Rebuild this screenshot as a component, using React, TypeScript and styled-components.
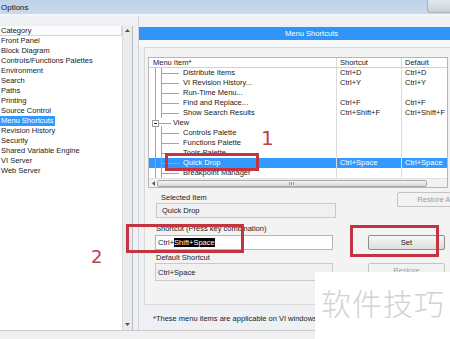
import React from "react";
import styled, { createGlobalStyle } from "styled-components";

const Global = createGlobalStyle`
  html, body { margin: 0; padding: 0; overflow: hidden; background: #f0f0f0; }
  * { box-sizing: border-box; }
`;

const Page = styled.div`
  position: relative;
  width: 450px;
  height: 339px;
  overflow: hidden;
  background: #f0f0f0;
  font-family: "Liberation Sans", Arial, sans-serif;
  font-size: 7.5px;
  color: #1a1a1a;
  display: flex;
  flex-direction: column;
`;

const TitleBar = styled.div`
  height: 16px;
  flex: none;
  display: flex;
  align-items: flex-start;
  background: linear-gradient(#bed2e7, #ccdbeb);
  border-bottom: 2px solid #f2f6fa;
`;

const TitleText = styled.div`
  font-size: 8px;
  line-height: 16px;
  padding-left: 1px;
  color: #111;
`;

const WinControl = styled.div`
  margin-left: auto;
  width: 23px;
  height: 13px;
  border: 1px solid #a9b4c0;
  border-top: none;
  border-right: none;
  border-radius: 0 0 0 3px;
  background: linear-gradient(#e4e8ed, #c9d0d8);
`;

const Body = styled.div`
  flex: none;
  height: 314px;
  display: flex;
  background: #eef0f3;
`;

const LeftPane = styled.div`
  width: 138px;
  flex: none;
  padding-top: 10px;
  display: flex;
`;

const CategoryList = styled.div`
  width: 133px;
  height: 304px;
  display: flex;
  background: #fff;
  border-right: 1px solid #b9bcc0;
`;

const ListItems = styled.div`
  flex: 1;
  display: flex;
  flex-direction: column;
`;

const ListHeader = styled.div`
  height: 10px;
  line-height: 9px;
  padding-left: 1px;
  border-bottom: 1px solid #d4d4d4;
  border-right: 1px solid #d4d4d4;
  background: #fbfbfb;
`;

const ListItem = styled.div<{ $selected?: boolean }>`
  height: 10px;
  line-height: 10px;
  & > span {
    display: inline-block;
    padding: 0 1px;
    background: ${(p) => (p.$selected ? "#3399ff" : "transparent")};
    color: ${(p) => (p.$selected ? "#fff" : "#1a1a1a")};
  }
`;

const VScroll = styled.div`
  width: 10px;
  flex: none;
  background: #ebebeb;
  border-left: 1px solid #dadada;
  display: flex;
  flex-direction: column;
  justify-content: space-between;
  align-items: center;
  padding: 3px 0 4px;
`;

const RightPane = styled.div`
  width: 346px;
  flex: none;
  padding-top: 11px;
  display: flex;
  flex-direction: column;
  border-left: 1px solid #cfd2d6;
`;

const PageHeader = styled.div`
  height: 13px;
  flex: none;
  background: #2f94f4;
  color: #fff;
  text-align: center;
  line-height: 13px;
  font-size: 7.6px;
`;

const HeaderStrip = styled.div`
  height: 7px;
  flex: none;
  background: #f6f8fa;
`;

const Inner = styled.div`
  flex: 1;
  margin-left: 5px;
  border-top: 1px solid #d8d8d8;
  border-left: 1px solid #d8d8d8;
  border-bottom: 1px solid #d8d8d8;
  background: #f3f3f3;
  padding: 9px 0 0 3px;
  display: flex;
  flex-direction: column;
`;

const TreeBox = styled.div`
  width: 300px;
  background: #fff;
  border: 1px solid #b5b5b5;
  display: flex;
  flex-direction: column;
`;

const Cell = styled.div<{ $w?: number; $sep?: boolean }>`
  width: ${(p) => (p.$w ? `${p.$w}px` : "auto")};
  flex: ${(p) => (p.$w ? "none" : "1")};
  padding-left: 3px;
  display: flex;
  align-items: center;
  white-space: nowrap;
  overflow: hidden;
  border-left: ${(p) => (p.$sep ? "1px solid #dcdcdc" : "none")};
`;

const TreeHeader = styled.div`
  height: 10px;
  display: flex;
  line-height: 9px;
  border-bottom: 1px solid #d0d0d0;
  & > ${Cell}:first-child { padding-left: 4px; }
`;

const TreeRows = styled.div`
  height: 110px;
  overflow: hidden;
  display: flex;
  flex-direction: column;
`;

const TreeRow = styled.div<{ $selected?: boolean }>`
  height: 10px;
  flex: none;
  display: flex;
  line-height: 10px;
  background: ${(p) => (p.$selected ? "#3399ff" : "transparent")};
  color: ${(p) => (p.$selected ? "#fff" : "#1a1a1a")};
  & > ${Cell}:first-child { padding-left: 0; }
`;

const HScroll = styled.div`
  height: 9px;
  display: flex;
  align-items: center;
  background: #f2f2f2;
  border-top: 1px solid #e2e2e2;
  padding: 0 20px 0 3px;
  gap: 2px;
`;

const Thumb = styled.div`
  flex: 1;
  height: 7px;
  border: 1px solid #a8a8a8;
  border-radius: 2px;
  background: linear-gradient(#f4f4f4, #d8d8d8);
  display: flex;
  align-items: center;
  justify-content: center;
`;

const Form = styled.div`
  margin: 5px 0 0 7px;
  display: flex;
`;

const LeftCol = styled.div`
  width: 181px;
  flex: none;
  display: flex;
  flex-direction: column;
`;

const Label = styled.div<{ $indent: number; $top: number }>`
  height: 10px;
  line-height: 10px;
  margin-top: ${(p) => p.$top}px;
  padding-left: ${(p) => p.$indent}px;
  color: #222;
`;

const Field = styled.div<{ $disabled?: boolean; $h: number; $w: number; $left: number; $pad: number; $top?: number }>`
  height: ${(p) => p.$h}px;
  width: ${(p) => p.$w}px;
  margin-left: ${(p) => p.$left}px;
  margin-top: ${(p) => p.$top ?? 0}px;
  padding-left: ${(p) => p.$pad}px;
  display: flex;
  align-items: center;
  background: ${(p) => (p.$disabled ? "#f0f0f0" : "#fff")};
  border: 1px solid ${(p) => (p.$disabled ? "#c9c9c9" : "#b4b6ba")};
  white-space: nowrap;
`;

const Highlight = styled.span`
  background: #000;
  color: #fff;
`;

const RightCol = styled.div`
  margin-left: 32px;
  display: flex;
  flex-direction: column;
`;

const Button = styled.div<{ $disabled?: boolean; $top: number; $left?: number }>`
  width: 77px;
  height: 15px;
  flex: none;
  margin-top: ${(p) => p.$top}px;
  margin-left: ${(p) => p.$left ?? 0}px;
  display: flex;
  align-items: center;
  justify-content: center;
  border: 1px solid ${(p) => (p.$disabled ? "#c4c4c4" : "#8d8d8d")};
  border-radius: 2px;
  background: ${(p) => (p.$disabled ? "#f2f2f2" : "linear-gradient(#f7f7f7, #dddddd)")};
  color: ${(p) => (p.$disabled ? "#9c9c9c" : "#111")};
`;

const Footnote = styled.div`
  height: 25px;
  flex: none;
  padding-left: 14px;
  display: flex;
  align-items: center;
  padding-top: 2px;
  color: #222;
`;

const BottomStrip = styled.div`
  flex: 1;
  border-top: 1px solid #c8c8c8;
  background: #f0f0f0;
`;

const RedBox = styled.div<{ $x: number; $y: number; $w: number; $h: number }>`
  position: absolute;
  left: ${(p) => p.$x}px;
  top: ${(p) => p.$y}px;
  width: ${(p) => p.$w}px;
  height: ${(p) => p.$h}px;
  border: 3px solid #c2343f;
`;

const Marker = styled.div<{ $x: number; $y: number; $size: number }>`
  position: absolute;
  left: ${(p) => p.$x}px;
  top: ${(p) => p.$y}px;
  font-family: "DejaVu Sans", sans-serif;
  font-size: ${(p) => p.$size}px;
  line-height: 1;
  color: #b8444c;
`;

const Watermark = styled.div`
  position: absolute;
  left: 315px;
  top: 272px;
  width: 135px;
  height: 67px;
  background: #fff;
  padding: 10px 0 0 6px;
  font-family: "Noto Sans CJK SC", sans-serif;
  font-size: 30px;
  font-weight: 300;
  letter-spacing: 1px;
  line-height: 40px;
  color: #d2d2d2;
  white-space: nowrap;
`;

const Tri = ({ dir }: { dir: "up" | "down" | "left" }) => {
  const pts =
    dir === "up" ? "0,3 5,3 2.5,0" : dir === "down" ? "0,0 5,0 2.5,3" : "3,0 3,5 0,2.5";
  const w = dir === "left" ? 3 : 5;
  const h = dir === "left" ? 5 : 3;
  return (
    <svg width={w} height={h} viewBox={`0 0 ${w} ${h}`} style={{ flex: "none" }}>
      <polygon points={pts} fill="#555" />
    </svg>
  );
};

const ChildGuide = () => (
  <svg width="34" height="10" viewBox="0 0 34 10" style={{ flex: "none" }}>
    <line x1="6.5" y1="0" x2="6.5" y2="10" stroke="#a3a3a3" />
    <line x1="12.5" y1="0" x2="12.5" y2="10" stroke="#a3a3a3" />
    <line x1="13" y1="5.5" x2="30" y2="5.5" stroke="#a3a3a3" />
  </svg>
);

const GroupGuide = () => (
  <svg width="24" height="10" viewBox="0 0 24 10" style={{ flex: "none" }}>
    <line x1="6.5" y1="0" x2="6.5" y2="2" stroke="#a3a3a3" />
    <line x1="6.5" y1="9" x2="6.5" y2="10" stroke="#a3a3a3" />
    <rect x="3.5" y="2.5" width="6" height="6" fill="#fff" stroke="#999" />
    <line x1="5" y1="5.5" x2="8" y2="5.5" stroke="#333" />
    <line x1="10" y1="5.5" x2="22" y2="5.5" stroke="#a3a3a3" />
    <line x1="12.5" y1="8" x2="12.5" y2="10" stroke="#a3a3a3" />
  </svg>
);

const categories = [
  "Front Panel",
  "Block Diagram",
  "Controls/Functions Palettes",
  "Environment",
  "Search",
  "Paths",
  "Printing",
  "Source Control",
  "Menu Shortcuts",
  "Revision History",
  "Security",
  "Shared Variable Engine",
  "VI Server",
  "Web Server",
];

type Row = { name: string; group?: boolean; sc?: string; def?: string; sel?: boolean };
const rows: Row[] = [
  { name: "Distribute Items", sc: "Ctrl+D", def: "Ctrl+D" },
  { name: "VI Revision History...", sc: "Ctrl+Y", def: "Ctrl+Y" },
  { name: "Run-Time Menu..." },
  { name: "Find and Replace...", sc: "Ctrl+F", def: "Ctrl+F" },
  { name: "Show Search Results", sc: "Ctrl+Shift+F", def: "Ctrl+Shift+F" },
  { name: "View", group: true },
  { name: "Controls Palette" },
  { name: "Functions Palette" },
  { name: "Tools Palette" },
  { name: "Quick Drop", sc: "Ctrl+Space", def: "Ctrl+Space", sel: true },
  { name: "Breakpoint Manager" },
];

export default function App() {
  return (
    <Page>
      <Global />
      <TitleBar>
        <TitleText>Options</TitleText>
        <WinControl />
      </TitleBar>
      <Body>
        <LeftPane>
          <CategoryList>
            <ListItems>
              <ListHeader>Category</ListHeader>
              {categories.map((c) => (
                <ListItem key={c} $selected={c === "Menu Shortcuts"}>
                  <span>{c}</span>
                </ListItem>
              ))}
            </ListItems>
            <VScroll>
              <Tri dir="up" />
              <Tri dir="down" />
            </VScroll>
          </CategoryList>
        </LeftPane>
        <RightPane>
          <PageHeader>Menu Shortcuts</PageHeader>
          <HeaderStrip />
          <Inner>
            <TreeBox>
              <TreeHeader>
                <Cell $w={187}>Menu Item*</Cell>
                <Cell $w={65} $sep>Shortcut</Cell>
                <Cell $sep>Default</Cell>
              </TreeHeader>
              <TreeRows>
                {rows.map((r) => (
                  <TreeRow key={r.name} $selected={r.sel}>
                    <Cell $w={187}>
                      {r.group ? <GroupGuide /> : <ChildGuide />}
                      {r.name}
                    </Cell>
                    <Cell $w={65} $sep>{r.sc ?? ""}</Cell>
                    <Cell $sep>{r.def ?? ""}</Cell>
                  </TreeRow>
                ))}
              </TreeRows>
              <HScroll>
                <Tri dir="left" />
                <Thumb>
                  <svg width="6" height="3" viewBox="0 0 6 3">
                    <path d="M0.5 0v3M2.5 0v3M4.5 0v3" stroke="#888" strokeWidth="0.8" />
                  </svg>
                </Thumb>
              </HScroll>
            </TreeBox>
            <Form>
              <LeftCol>
                <Label $indent={6} $top={0}>Selected Item</Label>
                <Field $disabled $h={15} $w={180} $left={1} $pad={5}>Quick Drop</Field>
                <Label $indent={1} $top={6}>Shortcut (Press key combination)</Label>
                <Field $h={15} $w={178} $left={0} $pad={2} $top={1}>
                  Ctrl+<Highlight>Shift+Space</Highlight>
                </Field>
                <Label $indent={1} $top={3}>Default Shortcut</Label>
                <Field $disabled $h={18} $w={178} $left={0} $pad={2}>Ctrl+Space</Field>
              </LeftCol>
              <RightCol>
                <Button $disabled $top={-1} $left={29}>Restore All</Button>
                <Button $top={28}>Set</Button>
                <Button $disabled $top={13}>Restore</Button>
              </RightCol>
            </Form>
          </Inner>
          <Footnote>*These menu items are applicable on VI windows</Footnote>
        </RightPane>
      </Body>
      <BottomStrip />

      <RedBox $x={165} $y={153} $w={94} $h={18} />
      <RedBox $x={126} $y={224} $w={118} $h={29} />
      <RedBox $x={350} $y={225} $w={89} $h={32} />
      <Marker $x={261} $y={128} $size={20}>1</Marker>
      <Marker $x={91} $y={248} $size={18}>2</Marker>
      <Watermark>软件技巧</Watermark>
    </Page>
  );
}
